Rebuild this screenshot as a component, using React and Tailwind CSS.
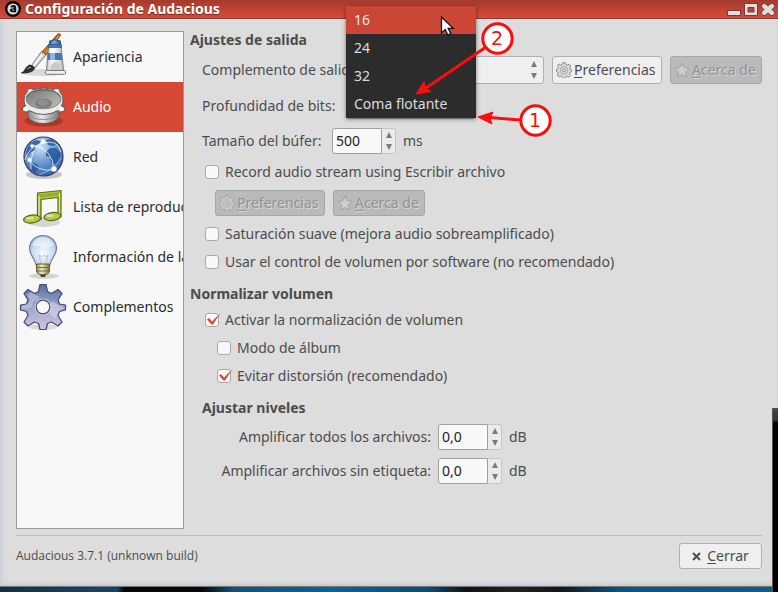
import React, { useId } from "react";

function BrushIcon() {
  return (
    <svg width="48" height="48" viewBox="0 0 48 48" aria-hidden="true">
      <defs>
        <linearGradient id="tube" x1="0" x2="1">
          <stop offset="0" stopColor="#c4c4c4" />
          <stop offset=".35" stopColor="#fff" />
          <stop offset="1" stopColor="#bdbdbd" />
        </linearGradient>
        <linearGradient id="cap" x1="0" x2="1">
          <stop offset="0" stopColor="#2f5f9c" />
          <stop offset=".4" stopColor="#7aa6da" />
          <stop offset="1" stopColor="#2a5692" />
        </linearGradient>
      </defs>
      <ellipse cx="24" cy="39.500" rx="22" ry="3.500" fill="#000" opacity=".12" />
      <path d="M39 .8q2.500-.5 2.500 1.500L27 22l-4-3z" fill="#c8700e" stroke="#71410a" strokeWidth=".9" />
      <path d="M39.500 3 27 19" stroke="#f2a64a" />
      <path d="m22.500 18.500 4.500 3.500-11 13-3.500-2.500z" fill="#d4d4d2" stroke="#6f6f6f" strokeWidth=".9" />
      <path d="m23 21.500-8.500 11" stroke="#fff" strokeWidth="1.400" />
      <path d="M10.500 32q4.500.5 5 4-3.500 4.500-13 4 2.500-.8 3.500-3.500t4.500-4.500z" fill="#303030" stroke="#151515" strokeWidth=".8" />
      <path d="M8 36q2-2 4-1.500" stroke="#aaa" fill="none" />
      <path d="M30 13h12q.5 4 1.200 11l1.300 14h-17l1-14q.5-7 1.500-11z" fill="url(#tube)" stroke="#777" />
      <path d="M29 20h13.500l.7 7H28.500z" fill="#3f76b5" />
      <path d="M31 20h5v7h-5z" fill="#8db5df" />
      <path d="M31 37q1-8 5.500-8t5 8z" fill="#cacaca" />
      <path d="M30.500 8q5.500-2.500 11 0v5h-11z" fill="url(#cap)" stroke="#2c5487" />
      <path d="M29.500 11.500h13v3h-13z" fill="#4278b8" stroke="#2c5487" strokeWidth=".7" />
      <rect x="26.500" y="37.500" width="20" height="3.800" rx="1" fill="#f1f1f1" stroke="#777" />
    </svg>
  );
}

function SpeakerIcon() {
  return (
    <svg width="48" height="48" viewBox="0 0 48 48" aria-hidden="true">
      <defs>
        <linearGradient id="rim" x1="0" y1="0" x2="0" y2="1">
          <stop offset="0" stopColor="#d8d8d6" />
          <stop offset="1" stopColor="#f0f0ee" />
        </linearGradient>
        <linearGradient id="cone" x1="0" y1="0" x2="1" y2="1">
          <stop offset="0" stopColor="#747472" />
          <stop offset="1" stopColor="#c3c3c0" />
        </linearGradient>
        <linearGradient id="base" x1="0" x2="1">
          <stop offset="0" stopColor="#8b8b89" />
          <stop offset=".45" stopColor="#e8e8e6" />
          <stop offset="1" stopColor="#777775" />
        </linearGradient>
      </defs>
      <ellipse cx="25" cy="38" rx="19" ry="5.500" fill="#000" opacity=".22" />
      <path d="M9 26v8q4 6.500 15.500 6.500T40 34v-8z" fill="url(#base)" stroke="#5b5b59" />
      <path d="M9.500 31.500Q13 36.500 24.500 36.500t15-5" fill="none" stroke="#8c8c8a" />
      <path
        d="M10 5.500q2.500-.8 4 1Q24.500 3.500 35 6.500q1.500-1.800 4-1 2.500 1 2 3.500 3.500 3.500 3 8 0 3.500-1.500 6 3 .5 3.200 3-.2 3-3.700 3-2 0-3-1.500-14 8-29 0-1 1.500-3 1.500-3.500 0-3.700-3 .2-2.500 3.200-3Q5 20.500 5 17q-.5-4.500 3-8-.5-2.500 2-3.500z"
        fill="url(#rim)"
        stroke="#5b5b59"
      />
      <ellipse cx="24.500" cy="16" rx="17.500" ry="9.800" fill="url(#cone)" stroke="#868684" />
      <path d="M7.500 14Q11 7 24.500 7t17 7" fill="none" stroke="#5b5b59" />
      <ellipse cx="24.500" cy="20.500" rx="8.500" ry="4.800" fill="#7f7f7d" />
      <ellipse cx="24" cy="19.500" rx="5.500" ry="3" fill="#90908e" />
      <g fill="#fff">
        <circle cx="11" cy="7.500" r="1" />
        <circle cx="38" cy="7.500" r="1" />
        <circle cx="6" cy="26" r="1.600" />
        <circle cx="43" cy="26" r="1.600" />
      </g>
    </svg>
  );
}

function GlobeIcon() {
  return (
    <svg width="48" height="48" viewBox="0 0 48 48" aria-hidden="true">
      <defs>
        <radialGradient id="sea" cx=".4" cy=".25" r=".8">
          <stop offset="0" stopColor="#d3e4f5" />
          <stop offset=".5" stopColor="#6d9dd2" />
          <stop offset="1" stopColor="#2d5f9f" />
        </radialGradient>
      </defs>
      <ellipse cx="25" cy="41.500" rx="18" ry="4.500" fill="#000" opacity=".2" />
      <circle cx="24.500" cy="23.500" r="19.500" fill="url(#sea)" stroke="#363b78" strokeWidth="1.200" />
      <path d="M8 16q3-7 9-9l5 1-2 4-4 1 1 4-5 2-3 4-2-2zM27 19l4-4 6 0 4 4 1 6-6 7-4-3-1-5-4-1zM12 29l6 2 2 4-4 5-4-4zM27 7l6-1 5 5-4 2-5-1z" fill="#28589b" opacity=".85" />
      <g fill="none" stroke="#fff" opacity=".75">
        <path d="M6 27Q9 14 24 10t18 9" />
        <path d="M14 12q20 4 21 25" />
        <path d="M10 27q8 12 25 10" />
        <path d="M24 8Q10 17 12 36" />
        <path d="M42 24Q39 34 20 42" opacity=".6" />
      </g>
      <g fill="#fff">
        <circle cx="24" cy="8.500" r="2.200" />
        <circle cx="10.500" cy="27" r="2.200" />
        <circle cx="35" cy="36" r="2.700" />
        <circle cx="13" cy="13" r="1.800" />
      </g>
    </svg>
  );
}

function NotesIcon() {
  return (
    <svg width="48" height="48" viewBox="0 0 48 48" aria-hidden="true">
      <ellipse cx="25" cy="39" rx="16" ry="5" fill="#000" opacity=".14" />
      <g fill="#b5c84b" stroke="#526b16" strokeWidth="1.200" strokeLinejoin="round">
        <path d="M18.500 10 42 7.500v26h-3v-19l-17 2v20h-3.500z" />
        <path d="M20 11.500 40.500 9v3.500L20 15z" fill="#96ad26" stroke="none" />
        <path d="M20 13v22M40.500 10v22" stroke="#dce99d" />
        <ellipse cx="13" cy="36" rx="8.500" ry="4" transform="rotate(-7 13 36)" />
        <ellipse cx="33.500" cy="33.500" rx="8.500" ry="4" transform="rotate(-7 33.500 33.500)" />
      </g>
      <g fill="#e4efae" opacity=".7">
        <ellipse cx="11" cy="35" rx="4" ry="1.500" />
        <ellipse cx="31" cy="32.500" rx="4" ry="1.500" />
      </g>
    </svg>
  );
}

function BulbIcon() {
  return (
    <svg width="48" height="48" viewBox="0 0 48 48" aria-hidden="true">
      <defs>
        <radialGradient id="glass" cx=".5" cy=".6" r=".65">
          <stop offset="0" stopColor="#f7fafd" />
          <stop offset=".6" stopColor="#c9dcf1" />
          <stop offset="1" stopColor="#8db3e2" />
        </radialGradient>
        <linearGradient id="screw" x1="0" x2="1">
          <stop offset="0" stopColor="#8d8757" />
          <stop offset=".4" stopColor="#f3efbd" />
          <stop offset="1" stopColor="#77713f" />
        </linearGradient>
      </defs>
      <ellipse cx="25" cy="43" rx="15" ry="3" fill="#000" opacity=".14" />
      <path d="M24 2.500c8 0 13.500 6 13.500 13C37.500 22 32 25 31 32H17C16 25 10.500 22 10.500 15.500c0-7 5.500-13 13.500-13z" fill="url(#glass)" stroke="#6f7d98" strokeWidth="1.200" />
      <path d="M13 13q1-8 10-9 9 0 12 8-7 4-11 2-6-2-11-1z" fill="#fff" opacity=".45" />
      <path d="m22 31-2-9 3 2 2-2 2 2 2-2-2 9" fill="none" stroke="#b9bbb2" strokeWidth=".8" />
      <path d="M17.500 31h13v8q-2 3-6.500 3t-6.500-3z" fill="url(#screw)" stroke="#66612f" />
      <path d="M18 34.500h12M18 38h12" stroke="#77713f" />
      <path d="M21 41.500h6l-1 2.500h-4z" fill="#444" />
    </svg>
  );
}

function GearIcon() {
  return (
    <svg width="48" height="48" viewBox="0 0 48 48" aria-hidden="true">
      <defs>
        <linearGradient id="gear" x1="0" y1="0" x2="0" y2="1">
          <stop offset="0" stopColor="#5b709c" />
          <stop offset=".5" stopColor="#9ba6cb" />
          <stop offset="1" stopColor="#cfc5e2" />
        </linearGradient>
      </defs>
      <ellipse cx="24" cy="44" rx="14" ry="3" fill="#000" opacity=".12" />
      <path
        d="M21 1.500h6l1.500 7 4 2 6.500-4 4 4-4 6.500 1.500 4 6 1v5l-6 1.500-1.500 4 4 6.500-4 4-6.500-4-4 1.500-1.500 6h-6l-1.500-6-4-1.500-6.500 4-4-4 4-6.500-1.500-4-6-1.500v-5l6-1 1.500-4-4-6.500 4-4 6.500 4 4-2z"
        fill="url(#gear)"
        stroke="#414a72"
        strokeWidth="1.200"
        strokeLinejoin="round"
      />
      <path d="m8 12 4-3 5 3 4 2-3 3-4 2-1 5-6 2H3v-3l6-2 2-4z" fill="#c5cbe0" opacity=".6" />
      <path d="m33 18 8 5 4 1-5 4-3 7-6-3-2-6z" fill="#e2dced" opacity=".5" />
      <circle cx="24" cy="24" r="8.500" fill="#d8d9e8" opacity=".8" />
      <circle cx="24" cy="24" r="6.800" fill="#f8f8f8" stroke="#414a72" strokeWidth="1.200" />
    </svg>
  );
}

function SmallGear({ faded }) {
  return (
    <svg className={"shrink-0 " + (faded ? "opacity-50" : "")} width="16" height="16" viewBox="0 0 16 16" aria-hidden="true">
      <path
        d="M6.500.7h3l.4 2 1.300.6 1.800-1.100 1.800 1.800-1.100 1.800.6 1.300 1.200.4v2.400l-1.500.4-.5 1.400 1.100 1.700-1.800 1.800-1.700-1.100-1.300.5-.4 1.500h-3L6 14.300l-1.300-.5L3 14.900l-1.800-1.800 1.100-1.700-.5-1.400-1.300-.4V7.200l1.400-.4.5-1.300L1.300 3.700 3 2l1.800 1.100 1.300-.5z"
        fill="#dadad8"
        stroke="#8f8f8d"
        strokeLinejoin="round"
      />
      <circle cx="8" cy="8.300" r="3.800" fill="none" stroke="#a8a8a6" />
      <circle cx="8" cy="8.300" r="1.500" fill="#eee" stroke="#929290" />
    </svg>
  );
}

function SmallStar() {
  return (
    <svg className="shrink-0 opacity-60" width="16" height="16" viewBox="0 0 16 16" aria-hidden="true">
      <path d="m8 .8 2.200 4.900 5.200.6-3.900 3.600 1.100 5.300L8 12.600l-4.600 2.600 1.100-5.300L.6 6.300l5.200-.6z" fill="#dadad8" stroke="#92928f" strokeLinejoin="round" />
    </svg>
  );
}

const pages = [
  { name: "Apariencia", Icon: BrushIcon },
  { name: "Audio", Icon: SpeakerIcon, active: true },
  { name: "Red", Icon: GlobeIcon },
  { name: "Lista de reproducción", Icon: NotesIcon },
  { name: "Información de la canción", Icon: BulbIcon },
  { name: "Complementos", Icon: GearIcon },
];

function Arrows() {
  return (
    <svg width="6" height="18" viewBox="0 0 6 18" aria-hidden="true">
      <path d="M3 0 6 6H0zM3 18 0 12h6z" fill="#7b7b7b" />
    </svg>
  );
}

function ToolButton({ icon, children, disabled, width }) {
  const [first, ...rest] = children;
  return (
    <button
      type="button"
      disabled={disabled}
      className={
        "flex h-full shrink-0 items-center gap-[2px] whitespace-nowrap rounded-[3px] border px-[3px] " +
        width +
        (disabled
          ? " border-[#a6a6a6] bg-[#bababa] text-[#929292] [text-shadow:1px_1px_0_#d8d8d8]"
          : " border-[#b0b0b0] bg-[#efefef] text-[#4c4c4c]")
      }
    >
      {icon}
      <span>
        <span className="underline underline-offset-2">{first}</span>
        {rest.join("")}
      </span>
    </button>
  );
}

function Check({ label, checked, className }) {
  const id = useId();
  return (
    <div className={"flex h-5 items-center " + className}>
      <span className="relative flex">
        <input
          id={id}
          type="checkbox"
          defaultChecked={checked}
          className="peer size-[14px] appearance-none rounded-[3px] border border-[#a9a9a9] bg-[#f8f8f8]"
        />
        <svg className="pointer-events-none absolute left-0 -top-px hidden peer-checked:block" width="17" height="14" viewBox="0 0 17 14" aria-hidden="true">
          <path d="m2 7.500 2-1.500 3 3.500L15.500 1 8 12.500H6.500z" fill="#d64937" />
        </svg>
      </span>
      <label htmlFor={id} className="pl-[6px] whitespace-nowrap">
        {label}
      </label>
    </div>
  );
}

function Spin({ label, value, unit, labelWidth, className }) {
  const id = useId();
  return (
    <div className={"flex h-[26px] items-center " + className}>
      <label htmlFor={id} className={"whitespace-nowrap " + labelWidth}>
        {label}
      </label>
      <input
        id={id}
        type="text"
        defaultValue={value}
        className="h-full w-[50px] rounded-l-[3px] border border-[#a0a0a0] bg-[#f8f8f8] px-[3px] pb-[2px] text-[#222]"
      />
      <span className="flex h-full w-[14px] items-center justify-center rounded-r-[3px] border border-l-0 border-[#c6c6c6] bg-[#ebebeb]">
        <Arrows />
      </span>
      <span className="ml-[7px]">{unit}</span>
    </div>
  );
}

function TitleBar() {
  return (
    <header className="flex h-[19px] shrink-0 items-center border-b border-[#8b3b31] bg-linear-to-b from-[#a53a2e] to-[#d64b3a] pl-[5px] pr-[3px]">
      <svg width="16" height="16" viewBox="0 0 16 16" aria-hidden="true">
        <circle cx="8" cy="8" r="8" fill="#0b0b0b" />
        <circle cx="8" cy="8" r="5.600" fill="#ddd" />
        <path d="M5.200 6.300Q5.800 4 8.500 4t2.700 2.700v4.600H7.300Q4.800 11.200 4.800 9.200t4.100-2Q9 5.800 7.600 6.400zM8.900 8.500q-1.700-.2-1.700.6t1.700.4z" fill="#111" />
      </svg>
      <h1 className="ml-1 flex-1 whitespace-nowrap font-bold text-white [text-shadow:0_1px_1px_#702a22]">Configuración de Audacious</h1>
      <div className="flex h-full gap-[3px]">
        <button type="button" aria-label="Minimizar">
          <svg width="14" height="18" viewBox="0 0 14 18"><path d="M.5 10.500h13v5H.5z" fill="#dedede" stroke="#743a33" /></svg>
        </button>
        <button type="button" aria-label="Maximizar">
          <svg width="14" height="18" viewBox="0 0 14 18">
            <path fillRule="evenodd" d="M.5 3.500h13v12H.5zM4 7.500v4.500h6V7.500z" fill="#dedede" stroke="#743a33" />
          </svg>
        </button>
        <button type="button" aria-label="Cerrar ventana">
          <svg width="14" height="18" viewBox="0 0 14 18">
            <path d="M4 3.500 7 6l3-2.500h1.500l2 2V7L11 9.500l2.500 2.500v1.500l-2 2H10L7 13l-3 2.500H2.500l-2-2V12L3 9.500.5 7V5.500l2-2z" fill="#dedede" stroke="#743a33" strokeLinejoin="round" />
          </svg>
        </button>
      </div>
    </header>
  );
}

function BitDepthMenu() {
  return (
    <ul role="listbox" aria-label="Profundidad de bits" className="absolute bottom-px left-0 z-10 w-[130px] bg-[#2c2c2c] text-[#dcdcdc] shadow-[0_1px_4px_rgba(0,0,0,0.5)]">
      {["16", "24", "32", "Coma flotante"].map((depth, i) => (
        <li key={depth} role="option" aria-selected={i === 0} className={"flex h-7 items-center px-2 whitespace-nowrap " + (i === 0 ? "bg-[#cb4635] text-[#f0e8e6]" : "")}>
          {depth}
        </li>
      ))}
    </ul>
  );
}

function Annotations() {
  return (
    <svg className="pointer-events-none absolute left-0 top-0 z-20" width="600" height="150" viewBox="0 0 600 150" aria-hidden="true">
      <path d="M441.500 17v16l3.700-3.500 2.600 5.500 3-1.400-2.600-5.300h5z" fill="#fff" stroke="#111" strokeWidth="1.300" />
      <path d="M486 47 426 88M520 120l-30-2.500" stroke="#fb0d0d" strokeWidth="3" />
      <path d="m416 94 8-12.500 1.500 6.500 5.500 3.500zM478 117l15-5-3 6 2 6z" fill="#fb0d0d" stroke="#fb0d0d" strokeLinejoin="round" />
      <g fill="#fff" stroke="#fb0d0d" strokeWidth="3">
        <circle cx="497.500" cy="38.500" r="14.700" />
        <circle cx="535.500" cy="120.500" r="14.700" />
      </g>
      <g fill="#fb0d0d" fontFamily="DejaVu Sans, sans-serif" fontSize="19" textAnchor="middle">
        <text x="497" y="45">2</text>
        <text x="535" y="127">1</text>
      </g>
    </svg>
  );
}

export default function App() {
  return (
    <div className="relative flex min-h-screen flex-col overflow-hidden bg-[linear-gradient(90deg,#123149_0,#184565_15%,#0a0606_16%,#0a0606_26%,#11527f_30%,#0565a0_43%,#0a4c74_55%,#111_60%,#222_66%,#151515_72%,#07568b_80%,#0d5d8f_100%)] pb-[5px] font-['Noto_Sans','Open_Sans',sans-serif] text-[14px] leading-5 text-[#4c4c4c]">
      <div className="flex flex-1 flex-col border-b border-[#777] bg-[#dddddd] shadow-[inset_4px_0_4px_-2px_#c5d1dc,inset_0_-4px_4px_-2px_#c3c9ce]">
        <TitleBar />
        <div className="flex flex-1 flex-col px-4 pt-3 pb-[17px]">
          <div className="flex flex-1">
            <nav aria-label="Categorías" className="mb-[6px] w-[168px] shrink-0 overflow-hidden border border-[#9a9a9a] bg-[#f8f8f8]">
              {pages.map(({ name, Icon, active }) => (
                <button
                  key={name}
                  type="button"
                  aria-current={active ? "page" : undefined}
                  className={"flex h-[50px] w-full items-center gap-[6px] pl-[2px] text-left whitespace-nowrap " + (active ? "bg-[#d64937] text-white" : "text-[#2c2c2c]")}
                >
                  <span className="shrink-0">
                    <Icon />
                  </span>
                  {name}
                </button>
              ))}
            </nav>
            <main className="min-w-0 flex-1 pl-[6px]">
              <h2 className="h-[18px] leading-[18px] font-bold">Ajustes de salida</h2>
              <div className="mt-[7px] flex h-7 items-center gap-2 pl-3">
                <label htmlFor="plugin" className="whitespace-nowrap">Complemento de salida:</label>
                <span className="relative h-full min-w-0 flex-1">
                  <select id="plugin" className="h-full w-full appearance-none rounded-[3px] border border-[#b0b0b0] bg-[#efefef] px-2">
                    <option aria-label="Salida predeterminada"></option>
                  </select>
                  <span className="pointer-events-none absolute inset-y-0 right-[7px] flex items-center">
                    <Arrows />
                  </span>
                </span>
                <ToolButton icon={<SmallGear />} width="w-[110px]">Preferencias</ToolButton>
                <ToolButton icon={<SmallStar />} width="w-[92px]" disabled>Acerca de</ToolButton>
              </div>
              <div className="mt-2 flex h-[27px] items-center pl-3">
                <label htmlFor="depth" className="w-36 whitespace-nowrap">Profundidad de bits:</label>
                <span className="relative h-full">
                  <select id="depth" className="h-full w-[130px] appearance-none rounded-[3px] border border-[#a9a9a9] bg-[#efefef] px-2">
                    <option>16</option>
                  </select>
                  <BitDepthMenu />
                </span>
              </div>
              <Spin label="Tamaño del búfer:" value="500" unit="ms" labelWidth="w-[130px]" className="mt-[9px] pl-3" />
              <Check label="Record audio stream using Escribir archivo" className="mt-2 pl-[15px]" />
              <div className="mt-2 flex h-[26px] gap-2 pl-[25px]">
                <ToolButton icon={<SmallGear faded />} width="w-[110px]" disabled>Preferencias</ToolButton>
                <ToolButton icon={<SmallStar />} width="w-[92px]" disabled>Acerca de</ToolButton>
              </div>
              <Check label="Saturación suave (mejora audio sobreamplificado)" className="mt-2 pl-[15px]" />
              <Check label="Usar el control de volumen por software (no recomendado)" className="mt-2 pl-[15px]" />
              <h2 className="mt-3 h-5 font-bold">Normalizar volumen</h2>
              <Check label="Activar la normalización de volumen" checked className="mt-[6px] pl-[15px]" />
              <Check label="Modo de álbum" className="mt-2 pl-[27px]" />
              <Check label="Evitar distorsión (recomendado)" checked className="mt-2 pl-[27px]" />
              <h3 className="mt-3 h-5 pl-3 font-bold">Ajustar niveles</h3>
              <Spin label="Amplificar todos los archivos:" value="0,0" unit="dB" labelWidth="w-[248px] pr-[7px] text-right" className="mt-[6px]" />
              <Spin label="Amplificar archivos sin etiqueta:" value="0,0" unit="dB" labelWidth="w-[248px] pr-[7px] text-right" className="mt-2" />
            </main>
          </div>
          <footer className="flex items-start justify-between border-t border-[#bdbdbd] pt-[7px]">
            <p className="pt-[3px] font-['Open_Sans','Noto_Sans',sans-serif] text-[12px]">Audacious 3.7.1 (unknown build)</p>
            <button type="button" className="flex h-[26px] w-[83px] items-center justify-center gap-[6px] rounded-[3px] border border-[#b0b0b0] bg-[#efefef]">
              <svg width="9" height="9" viewBox="0 0 9 9" aria-hidden="true">
                <path d="m1 1 7 7M8 1 1 8" stroke="#4c4c4c" strokeWidth="2" />
              </svg>
              <span>
                <span className="underline underline-offset-2">C</span>errar
              </span>
            </button>
          </footer>
        </div>
      </div>
      <Annotations />
      <div className="absolute right-0 top-[408px] bottom-0 w-[6px] border-l border-t border-[#555] bg-[linear-gradient(#444_0,#333_12px,#000_13px)]" />
    </div>
  );
}
